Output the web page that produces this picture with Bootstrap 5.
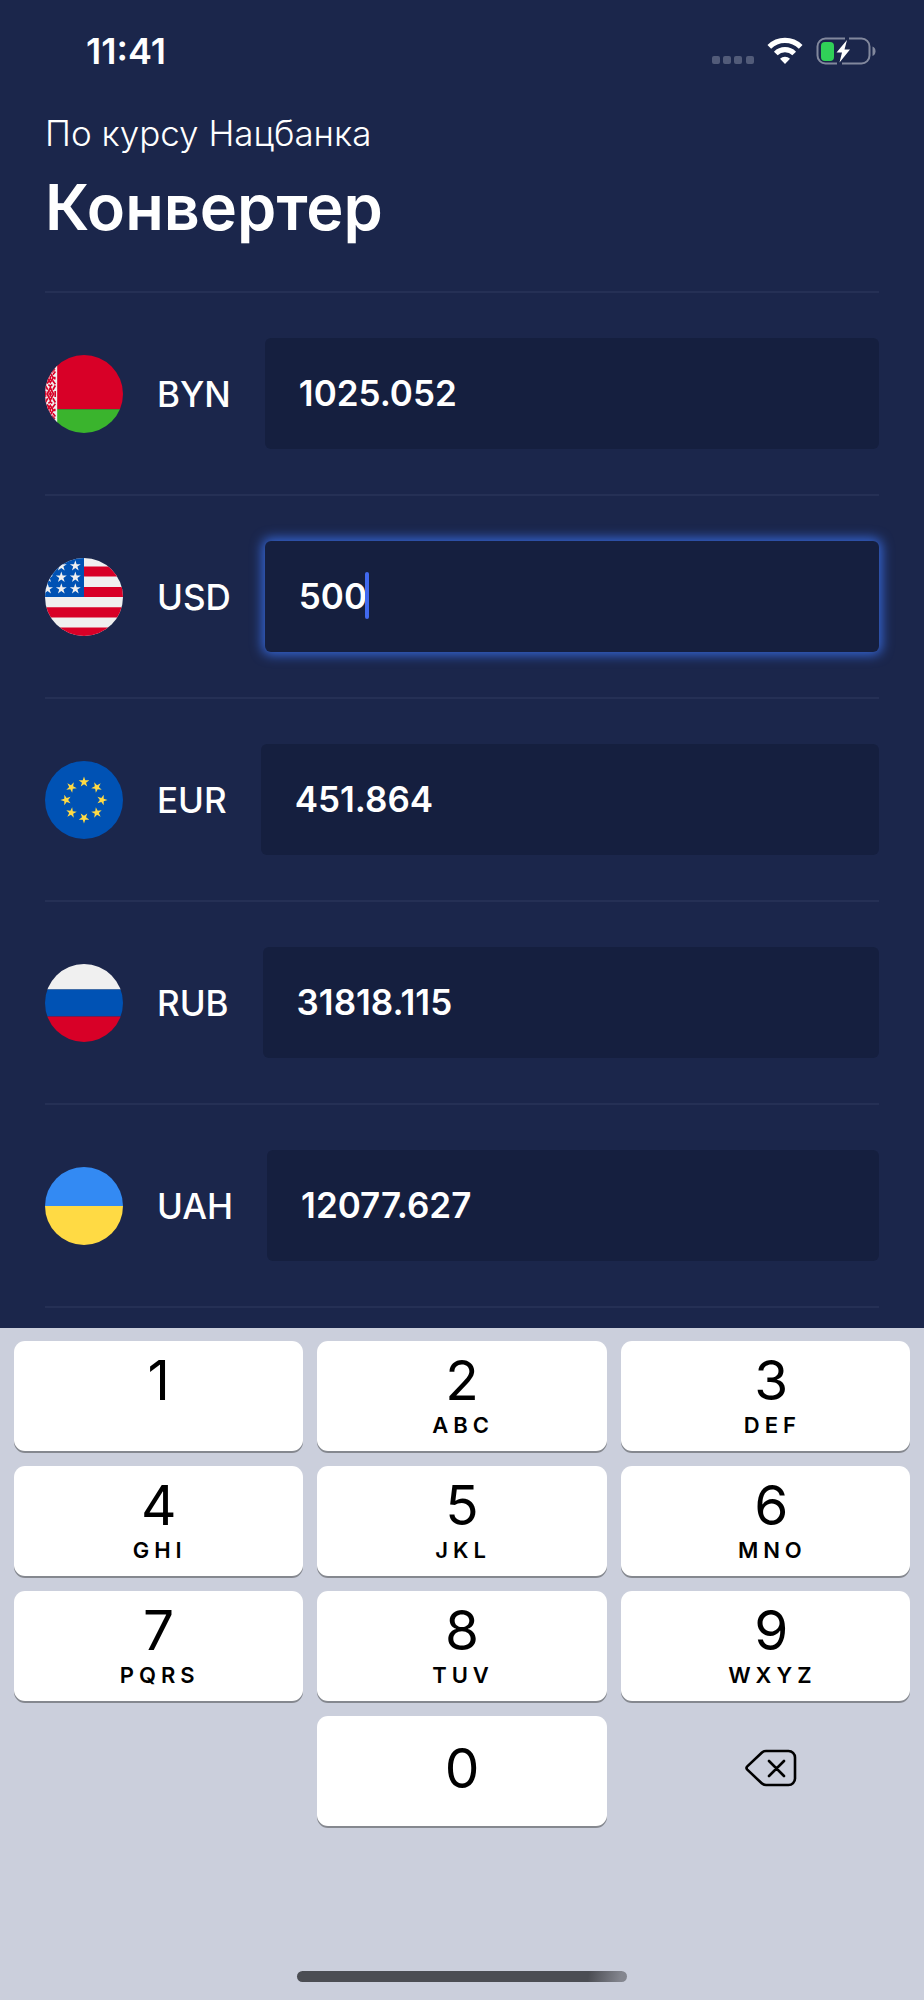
<!DOCTYPE html>
<html lang="ru">
<head>
<meta charset="utf-8">
<meta name="viewport" content="width=device-width, initial-scale=1">
<title>Конвертер</title>
<link href="https://cdn.jsdelivr.net/npm/bootstrap@5.3.0/dist/css/bootstrap.min.css" rel="stylesheet">
<style>
  body { background: #1b264b; color: #fff; font-family: Inter, "Liberation Sans", sans-serif; }
  .statusbar { padding: 30px 48px 40px 86px; }
  .clock { font-size: 36px; line-height: 42px; font-weight: 600; }
  .indicators { gap: 13px; }
  .screen { padding: 0 45px 20px; }
  .subtitle { font-size: 35px; line-height: 42px; font-weight: 300; margin-bottom: 14px; }
  .title { font-size: 63px; line-height: 78px; font-weight: 600; margin-bottom: 45px; }
  .rates { border-top: 2px solid #253055; }
  .rate { gap: 34px; padding: 45px 0; border-bottom: 2px solid #253055; }
  .flag { width: 78px; height: 78px; }
  .code { font-size: 35px; line-height: 42px; font-weight: 500; }
  .amount, .amount:focus {
    height: 111px; padding: 0 34px 2px; border: 0; border-radius: 6px; box-shadow: none;
    background: #151f3f; color: #fff; font-size: 35px; line-height: 42px; font-weight: 600;
  }
  .field { font-size: 35px; font-weight: 600; min-width: 0; }
  .field.active .amount { box-shadow: 0 0 12px 3px #3565d2; }
  .caret { left: calc(31px + 3ch); top: 31px; width: 4px; height: 47px; border-radius: 2px; background: #4169ef; }
  .keyboard { background: #cbcfdc; padding: 13px 14px 18px; }
  .keys { display: grid; grid-template-columns: repeat(3, 1fr); gap: 15px 14px; }
  .key { height: 110px; padding: 8px 0 0; border: 0; border-radius: 11px; background: #fff; color: #000; box-shadow: 0 2px 0 #85888f; }
  .key-plain { background: none; box-shadow: none; }
  .digit { font-size: 55px; line-height: 62px; }
  .letters { font-size: 22px; line-height: 28px; font-weight: 600; letter-spacing: 5px; padding-left: 2px; }
  .zero { padding: 0 0 6px; }
  .key:nth-child(3n) { padding-left: 12px; }
  .home { width: 330px; height: 11px; border-radius: 6px; background: linear-gradient(100deg, #4b4d53 0 88%, #84868f 98%); }
</style>
</head>
<body class="d-flex flex-column min-vh-100">

<svg class="d-none" aria-hidden="true">
  <symbol id="star" viewBox="-9 -9 18 18" overflow="visible">
    <path d="M0-10 2.25-3.09 9.51-3.09 3.63 1.18 5.88 8.09 0 3.82-5.88 8.09-3.63 1.18-9.51-3.09-2.25-3.09z"/>
  </symbol>
</svg>

<header class="statusbar d-flex justify-content-between align-items-center">
  <span class="clock">11:41</span>
  <div class="indicators d-flex align-items-center">
    <svg width="42" height="28" fill="#525b79" aria-hidden="true">
      <rect x="0" y="19" width="8" height="8" rx="2"/><rect x="11" y="19" width="8" height="8" rx="2"/>
      <rect x="22" y="19" width="8" height="8" rx="2"/><rect x="34" y="19" width="8" height="8" rx="2"/>
    </svg>
    <svg width="36" height="28" fill="none" stroke="#fff" stroke-width="5.2" aria-hidden="true">
      <path d="M2.3 9.9a22.3 22.3 0 0 1 31.4 0"/>
      <path d="M8.8 16.5a13 13 0 0 1 18.4 0"/>
      <path d="M13 21.700a7.200 7.200 0 0 1 10 0L18 27z" fill="#fff" stroke="none"/>
    </svg>
    <svg width="60" height="28" aria-hidden="true">
      <path d="M29 1.500H9.500a8 8 0 0 0-8 8v9a8 8 0 0 0 8 8H21M33 1.500h12.500a8 8 0 0 1 8 8v9a8 8 0 0 1-8 8H26" fill="none" stroke="#82889d" stroke-width="2"/>
      <path d="M56.500 9.500q3 1.200 3 4.700t-3 4.700z" fill="#82889d"/>
      <rect x="5" y="5" width="13" height="19" rx="4" fill="#30d158"/>
      <path d="M31 3 20.500 15.500h5.500L23.500 25.500 34 12.500h-5.500z" fill="#fff"/>
    </svg>
  </div>
</header>

<main class="screen">
  <p class="subtitle">По курсу Нацбанка</p>
  <h1 class="title">Конвертер</h1>

  <form class="rates">
    <div class="rate d-flex align-items-center">
      <svg class="flag rounded-circle flex-shrink-0" viewBox="0 0 512 512" aria-hidden="true">
        <path fill="#d80027" d="M0 0h512v356H0z"/>
        <path fill="#3ab42d" d="M77 356h435v156H77z"/>
        <path fill="#f0f0f0" d="M0 0h80v512H0z"/>
        <g fill="none" stroke="#d80027" stroke-width="11">
          <path d="M35 215 56 256 35 297 14 256zM35 238v36M24 256h22"/>
          <path d="M2 200 18 228M68 200 52 228M2 312 18 284M68 312 52 284M67 236v40M3 236v40"/>
          <path d="M35 120 54 150 35 180 16 150zM68 108 52 130M68 192 50 168M35 138v26M64 142v18M22 194l13 10 13-10M26 170l-12 18M45 112l20-20M10 180V150"/>
          <path d="M35 392 54 362 35 332 16 362zM68 404 52 382M68 320 50 344M35 374v-26M64 370v-18M22 318l13-10 13 10M26 342l-12-18M45 400l20 20M10 332v30"/>
        </g>
      </svg>
      <label class="code" for="byn">BYN</label>
      <div class="field flex-fill"><input class="form-control amount" id="byn" type="text" inputmode="decimal" value="1025.052"></div>
    </div>

    <div class="rate d-flex align-items-center">
      <svg class="flag rounded-circle flex-shrink-0" viewBox="0 0 512 512" aria-hidden="true">
        <path fill="#f0f0f0" d="M0 0h512v512H0z"/>
        <path fill="#d80027" d="M256 55h256v67H256zM256 190h256v66H256zM0 324h512v67H0zM0 457h512v55H0z"/>
        <path fill="#0052b4" d="M0 0h256v256H0z"/>
        <g fill="#f0f0f0">
          <use href="#star" x="73" y="18" width="68" height="68"/><use href="#star" x="165" y="18" width="68" height="68"/>
          <use href="#star" x="-17" y="93" width="68" height="68"/><use href="#star" x="73" y="93" width="68" height="68"/><use href="#star" x="165" y="93" width="68" height="68"/>
          <use href="#star" x="-17" y="169" width="68" height="68"/><use href="#star" x="73" y="169" width="68" height="68"/><use href="#star" x="165" y="169" width="68" height="68"/>
        </g>
      </svg>
      <label class="code" for="usd">USD</label>
      <div class="field active flex-fill position-relative">
        <input class="form-control amount" id="usd" type="text" inputmode="decimal" value="500">
        <span class="caret position-absolute"></span>
      </div>
    </div>

    <div class="rate d-flex align-items-center">
      <svg class="flag rounded-circle flex-shrink-0" viewBox="0 0 512 512" aria-hidden="true">
        <path fill="#0052b4" d="M0 0h512v512H0z"/>
        <g fill="#ffda44" transform="translate(256 256)">
          <use href="#star" x="-33" y="-151" width="66" height="66"/>
          <use href="#star" x="-33" y="-151" width="66" height="66" transform="rotate(45)"/>
          <use href="#star" x="-33" y="-151" width="66" height="66" transform="rotate(90)"/>
          <use href="#star" x="-33" y="-151" width="66" height="66" transform="rotate(135)"/>
          <use href="#star" x="-33" y="-151" width="66" height="66" transform="rotate(180)"/>
          <use href="#star" x="-33" y="-151" width="66" height="66" transform="rotate(225)"/>
          <use href="#star" x="-33" y="-151" width="66" height="66" transform="rotate(270)"/>
          <use href="#star" x="-33" y="-151" width="66" height="66" transform="rotate(315)"/>
        </g>
      </svg>
      <label class="code" for="eur">EUR</label>
      <div class="field flex-fill"><input class="form-control amount" id="eur" type="text" inputmode="decimal" value="451.864"></div>
    </div>

    <div class="rate d-flex align-items-center">
      <svg class="flag rounded-circle flex-shrink-0" viewBox="0 0 512 512" aria-hidden="true">
        <path fill="#f0f0f0" d="M0 0h512v167H0z"/>
        <path fill="#0052b4" d="M0 167h512v178H0z"/>
        <path fill="#d80027" d="M0 345h512v167H0z"/>
      </svg>
      <label class="code" for="rub">RUB</label>
      <div class="field flex-fill"><input class="form-control amount" id="rub" type="text" inputmode="decimal" value="31818.115"></div>
    </div>

    <div class="rate d-flex align-items-center">
      <svg class="flag rounded-circle flex-shrink-0" viewBox="0 0 512 512" aria-hidden="true">
        <path fill="#338af3" d="M0 0h512v256H0z"/>
        <path fill="#ffda44" d="M0 256h512v256H0z"/>
      </svg>
      <label class="code" for="uah">UAH</label>
      <div class="field flex-fill"><input class="form-control amount" id="uah" type="text" inputmode="decimal" value="12077.627"></div>
    </div>
  </form>
</main>

<section class="keyboard flex-grow-1 d-flex flex-column">
  <div class="keys">
    <button class="key d-flex flex-column align-items-center" type="button"><span class="digit">1</span></button>
    <button class="key d-flex flex-column align-items-center" type="button"><span class="digit">2</span><span class="letters">ABC</span></button>
    <button class="key d-flex flex-column align-items-center" type="button"><span class="digit">3</span><span class="letters">DEF</span></button>
    <button class="key d-flex flex-column align-items-center" type="button"><span class="digit">4</span><span class="letters">GHI</span></button>
    <button class="key d-flex flex-column align-items-center" type="button"><span class="digit">5</span><span class="letters">JKL</span></button>
    <button class="key d-flex flex-column align-items-center" type="button"><span class="digit">6</span><span class="letters">MNO</span></button>
    <button class="key d-flex flex-column align-items-center" type="button"><span class="digit">7</span><span class="letters">PQRS</span></button>
    <button class="key d-flex flex-column align-items-center" type="button"><span class="digit">8</span><span class="letters">TUV</span></button>
    <button class="key d-flex flex-column align-items-center" type="button"><span class="digit">9</span><span class="letters">WXYZ</span></button>
    <span></span>
    <button class="key zero d-flex align-items-center justify-content-center" type="button"><span class="digit">0</span></button>
    <button class="key key-plain zero d-flex align-items-center justify-content-center" type="button" aria-label="Удалить">
      <svg width="52" height="38" fill="none" stroke="#000" stroke-width="2.600" stroke-linecap="round" stroke-linejoin="round" aria-hidden="true">
        <path d="M21 2h22.500a6.500 6.500 0 0 1 6.500 6.500v21a6.500 6.500 0 0 1-6.500 6.500H21q-2.500 0-4.300-1.700L2.300 20.600q-1.600-1.600 0-3.200L16.700 3.700Q18.500 2 21 2zM24 12l15 15M39 12 24 27"/>
      </svg>
    </button>
  </div>
  <div class="home mt-auto mx-auto"></div>
</section>

<script src="https://cdn.jsdelivr.net/npm/bootstrap@5.3.0/dist/js/bootstrap.bundle.min.js"></script>
</body>
</html>
